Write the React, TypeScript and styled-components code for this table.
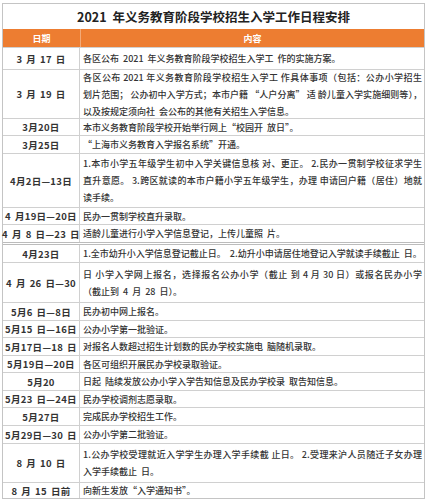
import React from 'react';
import styled, { createGlobalStyle } from 'styled-components';

const GlobalStyle = createGlobalStyle`
    html, body {
        margin: 0;
        padding: 0;
        background: #fff;
    }
    body {
        font-family: "Noto Sans CJK SC", "Noto Sans", sans-serif;
    }
`;

const Page = styled.div`
    width: 427px;
    box-sizing: border-box;
    padding: 3px 2px 1px 2px;
`;

const Table = styled.div`
    display: flex;
    flex-direction: column;
    border: 1px solid #c4c4c4;
`;

const Title = styled.div`
    height: 25px;
    display: flex;
    align-items: center;
    justify-content: center;
    font-size: 12.5px;
    font-weight: 700;
    color: #222;
    word-spacing: 3px;
`;

const HeaderRow = styled.div`
    display: grid;
    grid-template-columns: 77px 1fr;
    height: 18px;
    background: #ed7d31;
    color: #fff;
    font-size: 9px;
    font-weight: 700;
`;

const HeaderCell = styled.div`
    display: flex;
    align-items: center;
    justify-content: center;
    & + & {
        border-left: 1px solid rgba(255, 255, 255, 0.35);
    }
`;

const Row = styled.div<{ $h: number; $split?: boolean }>`
    display: grid;
    grid-template-columns: 77px 1fr;
    height: ${(p) => p.$h}px;
    box-sizing: border-box;
    border-top: ${(p) => (p.$split ? '3px double #bcbcbc' : '1px solid #d0d0d0')};
`;

const DateCell = styled.div`
    display: flex;
    align-items: center;
    justify-content: center;
    border-right: 1px solid #d0d0d0;
    font-size: 9.5px;
    font-weight: 700;
    color: #333;
    white-space: pre;
    word-spacing: 1.5px;
    letter-spacing: 0.3px;
`;

const ContentCell = styled.div`
    display: flex;
    flex-direction: column;
    justify-content: center;
    padding: 0 2px 0 3px;
    font-size: 9px;
    font-weight: 500;
    color: #333;
    line-height: 17px;
    overflow: hidden;
`;

// justified lines stretch to the cell edge, the last line of a cell runs free
const Line = styled.div<{ $fill?: boolean }>`
    text-align: ${(p) => (p.$fill ? 'justify' : 'left')};
    text-align-last: ${(p) => (p.$fill ? 'justify' : 'auto')};
    word-spacing: ${(p) => (p.$fill ? '0' : '2px')};
    white-space: ${(p) => (p.$fill ? 'normal' : 'nowrap')};
`;

type Item = { date: string; lines: string[]; h: number; split?: boolean };

const items: Item[] = [
    { date: '3 月 17 日', h: 22, lines: ['各区公布 2021 年义务教育阶段学校招生入学工 作的实施方案。'] },
    {
        date: '3 月 19 日',
        h: 49,
        lines: [
            '各区公布 2021 年义务教育阶段学校招生入学工 作具体事项（包括：公办小学招生',
            '划片范围； 公办初中入学方式；本市户籍 “人户分离” 适 龄儿童入学实施细则等），',
            '以及按规定须向社 会公布的其他有关招生入学信息。',
        ],
    },
    { date: '3月20日', h: 17, lines: ['本市义务教育阶段学校开始举行网上“校园开 放日”。'] },
    { date: '3月25日', h: 18, lines: ['“上海市义务教育入学报名系统”开通。'] },
    {
        date: '4月2日—13日',
        h: 54,
        lines: [
            '1.本市小学五年级学生初中入学关键信息核 对、更正。 2.民办一贯制学校征求学生',
            '直升意愿。 3.跨区就读的本市户籍小学五年级学生，办理 申请回户籍（居住）地就',
            '读手续。',
        ],
    },
    { date: '4 月19日—20日', h: 17, lines: ['民办一贯制学校直升录取。'] },
    { date: '4 月 8 日—23 日', h: 18, lines: ['适龄儿童进行小学入学信息登记，上传儿童照 片。'] },
    {
        date: '4月23日',
        h: 20,
        split: true,
        lines: ['1.全市幼升小入学信息登记截止日。 2.幼升小申请居住地登记入学就读手续截止 日。'],
    },
    {
        date: '4 月 26 日—30',
        h: 40,
        lines: [
            '日 小学入学网上报名，选择报名公办小学（截止 到 4 月 30 日）或报名民办小学',
            '（截止到 4 月 28 日）。',
        ],
    },
    { date: '5月6 日—8日', h: 18, lines: ['民办初中网上报名。'] },
    { date: '5月15 日—16日', h: 17, lines: ['公办小学第一批验证。'] },
    { date: '5月17日—18 日', h: 18, lines: ['对报名人数超过招生计划数的民办学校实施电 脑随机录取。'] },
    { date: '5月19日—20日', h: 17, lines: ['各区可组织开展民办学校录取验证。'] },
    { date: '5月20', h: 18, lines: ['日起 陆续发放公办小学入学告知信息及民办学校录 取告知信息。'] },
    { date: '5月23 日—24日', h: 17, lines: ['民办学校调剂志愿录取。'] },
    { date: '5月27日', h: 18, lines: ['完成民办学校招生工作。'] },
    { date: '5月29日—30 日', h: 18, lines: ['公办小学第二批验证。'] },
    {
        date: '8 月 10 日',
        h: 39,
        lines: [
            '1.公办学校受理就近入学学生办理入学手续截 止日。 2.受理来沪人员随迁子女办理',
            '入学手续截止 日。',
        ],
    },
    { date: '8 月 15 日前', h: 16, lines: ['向新生发放“入学通知书”。'] },
];

const App: React.FC = () => {
    return (
        <>
            <GlobalStyle />
            <Page>
                <Table>
                    <Title>2021 年义务教育阶段学校招生入学工作日程安排</Title>
                    <HeaderRow>
                        <HeaderCell>日期</HeaderCell>
                        <HeaderCell>内容</HeaderCell>
                    </HeaderRow>
                    {items.map((item, i) => (
                        <Row key={i} $h={item.h} $split={item.split}>
                            <DateCell>{item.date}</DateCell>
                            <ContentCell>
                                {item.lines.map((line, j) => (
                                    <Line key={j} $fill={j < item.lines.length - 1}>
                                        {line}
                                    </Line>
                                ))}
                            </ContentCell>
                        </Row>
                    ))}
                </Table>
            </Page>
        </>
    );
};

export default App;
